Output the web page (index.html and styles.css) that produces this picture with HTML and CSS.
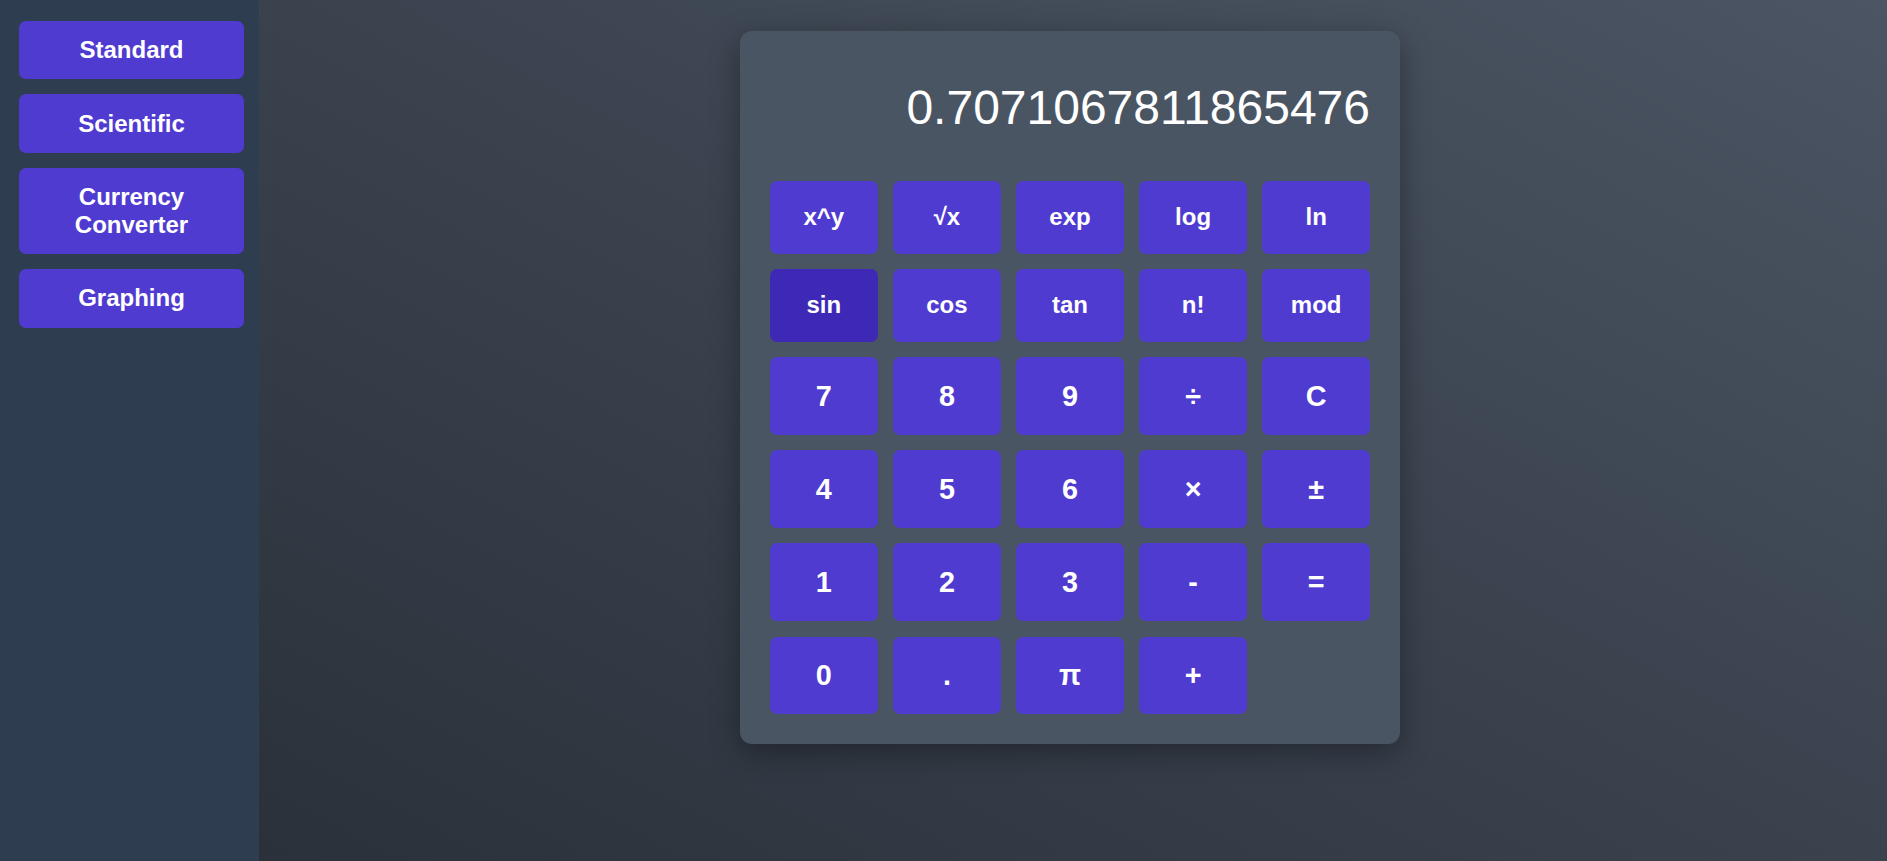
FILE: index.html
```html
<!DOCTYPE html>
<html lang="en">
<head>
<meta charset="utf-8">
<title>Calculator</title>
<link rel="stylesheet" href="styles.css">
</head>
<body>
<div class="app">
  <nav class="sidebar">
    <button class="nav-btn">Standard</button>
    <button class="nav-btn">Scientific</button>
    <button class="nav-btn">Currency<br>Converter</button>
    <button class="nav-btn">Graphing</button>
  </nav>
  <main class="main">
    <div class="calc">
      <div class="display">0.7071067811865476</div>
      <div class="keys">
        <button class="key fn">x^y</button>
        <button class="key fn">√x</button>
        <button class="key fn">exp</button>
        <button class="key fn">log</button>
        <button class="key fn">ln</button>
        <button class="key fn active">sin</button>
        <button class="key fn">cos</button>
        <button class="key fn">tan</button>
        <button class="key fn">n!</button>
        <button class="key fn">mod</button>
        <button class="key">7</button>
        <button class="key">8</button>
        <button class="key">9</button>
        <button class="key">÷</button>
        <button class="key">C</button>
        <button class="key">4</button>
        <button class="key">5</button>
        <button class="key">6</button>
        <button class="key">×</button>
        <button class="key">±</button>
        <button class="key">1</button>
        <button class="key">2</button>
        <button class="key">3</button>
        <button class="key">-</button>
        <button class="key">=</button>
        <button class="key">0</button>
        <button class="key">.</button>
        <button class="key">π</button>
        <button class="key">+</button>
      </div>
    </div>
  </main>
</div>
</body>
</html>
```

FILE: styles.css
```css
html, body {
  margin: 0;
  padding: 0;
  height: 100%;
  overflow: hidden;
}

body {
  font-family: "Liberation Sans", Arial, sans-serif;
  background: #2d343e;
}

.app {
  display: flex;
  height: 100%;
}

.sidebar {
  width: 259px;
  flex: none;
  box-sizing: border-box;
  padding: 21px 15px 0 19px;
  background: #2e3d50;
  display: flex;
  flex-direction: column;
  gap: 15px;
}

.nav-btn {
  font-family: inherit;
  font-size: 24px;
  font-weight: bold;
  color: #ffffff;
  background: #503bd1;
  border: none;
  border-radius: 7px;
  padding: 15.2px 10px;
  line-height: normal;
  text-align: center;
}

.main {
  flex: 1;
  display: flex;
  justify-content: center;
  align-items: flex-start;
  padding: 31px 6px 0 0;
  background: linear-gradient(to top right, #2a313a 0%, #3a424e 50%, #4b5563 100%);
}

.calc {
  width: 660px;
  box-sizing: border-box;
  padding: 30px;
  background: #4a5563;
  border-radius: 12px;
  box-shadow: 0 8px 30px rgba(0, 0, 0, 0.35);
}

.display {
  font-size: 48px;
  color: #ffffff;
  text-align: right;
  line-height: normal;
  padding: 18.6px 0 20px;
  margin-bottom: 26.2px;
  white-space: nowrap;
}

.keys {
  display: grid;
  grid-template-columns: repeat(5, 1fr);
  gap: 15.4px;
}

.key {
  font-family: inherit;
  font-size: 28.8px;
  font-weight: bold;
  color: #ffffff;
  background: #503bd1;
  border: none;
  border-radius: 7px;
  padding: 22.4px 0;
  line-height: normal;
  text-align: center;
}

.key.fn {
  font-size: 24px;
}

.key.active {
  background: #3d29b6;
}
```
